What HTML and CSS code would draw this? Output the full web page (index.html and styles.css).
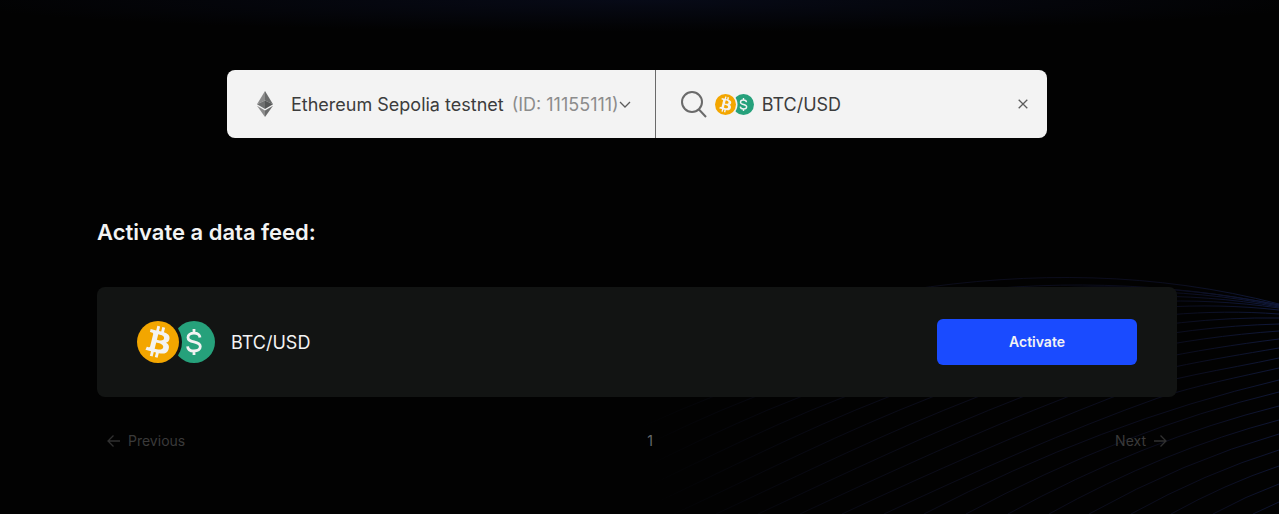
FILE: index.html
```html
<!DOCTYPE html>
<html lang="en">
<head>
<meta charset="utf-8">
<meta name="viewport" content="width=device-width, initial-scale=1">
<title>Data feeds</title>
<link rel="stylesheet" href="styles.css">
</head>
<body>
<svg class="waves" viewBox="560 260 719 254" aria-hidden="true">
  <defs>
    <linearGradient id="fade" gradientUnits="userSpaceOnUse" x1="640" y1="430" x2="1279" y2="300">
      <stop offset="0" stop-color="#10132c" stop-opacity="0"/>
      <stop offset="0.45" stop-color="#0c0d1c" stop-opacity="0.9"/>
      <stop offset="0.85" stop-color="#0b0d1f"/>
      <stop offset="1" stop-color="#10193c"/>
    </linearGradient>
  </defs>
  <g fill="none" stroke="url(#fade)">
    <path d="M535 397C783 300 1031 240 1279 304"/>
    <path d="M580 397C813 296 1046 258 1279 305"/>
    <path d="M625 397C843 302 1061 260 1279 305"/>
    <path d="M670 397C873 312 1076 266 1279 306"/>
    <path d="M464 514C554 472 622 432 712 397C901 320 1090 274 1279 307"/>
    <path d="M506 514C596 472 664 432 754 397C929 328 1104 283 1279 308"/>
    <path d="M548 514C638 472 710 432 800 397C960 336 1119 292 1279 310"/>
    <path d="M590 514C680 472 754 432 844 397C989 343 1134 303 1279 314"/>
    <path d="M632 514C722 472 798 432 888 397C1018 348 1149 316 1279 318"/>
    <path d="M674 514C764 472 842 432 932 397C1048 353 1163 327 1279 324"/>
    <path d="M716 514C806 472 887 432 977 397C1077 359 1179 338 1279 331"/>
    <path d="M758 514C848 472 932 432 1022 397C1108 365 1193 350 1279 339"/>
    <path d="M800 514C890 472 977 432 1067 397C1137 371 1209 360 1279 348"/>
    <path d="M842 514C932 472 1023 432 1113 397C1168 377 1224 370 1279 358"/>
    <path d="M884 514C974 472 1068 430 1158 398C1198 385 1239 377 1279 368"/>
    <path d="M924 514Q1101 422 1279 380"/>
    <path d="M966 514Q1122 430 1279 392"/>
    <path d="M1008 514Q1143 440 1279 406"/>
    <path d="M1049 514Q1164 450 1279 420"/>
    <path d="M1089 514Q1184 461 1279 434"/>
    <path d="M1131 514Q1205 473 1279 450"/>
    <path d="M1171 514Q1225 484 1279 466"/>
    <path d="M1213 514Q1246 496 1279 484"/>
    <path d="M1253 514L1279 502"/>
  </g>
</svg>

<svg class="defs" width="0" height="0" aria-hidden="true">
  <defs>
    <mask id="gap" maskUnits="userSpaceOnUse" x="0" y="0" width="78" height="42">
      <rect width="78" height="42" fill="#fff"/>
      <circle cx="21" cy="21" r="24" fill="#000"/>
    </mask>
    <symbol id="pair" viewBox="0 0 78 42">
      <g mask="url(#gap)"><circle cx="57" cy="21" r="21" fill="#26a17b"/></g>
      <path d="M57 8v4.500M57 29.500V34M63 16.500c-.3-2.800-2.600-4.400-6-4.400-3.600 0-6 1.700-6 4.300 0 2.900 2.700 3.800 6 4.500 3.600.8 6.300 1.700 6.300 4.700 0 2.700-2.600 4.400-6.300 4.400s-6.200-1.800-6.400-4.700" fill="none" stroke="#f3f3f3" stroke-width="2.800"/>
      <circle cx="21" cy="21" r="21" fill="#f3a600"/>
      <path transform="translate(21 21) scale(1.6) translate(-16 -16.100)" fill="#f3f3f3" d="M23.189 14.020c.314-2.096-1.283-3.223-3.465-3.975l.708-2.840-1.728-.43-.69 2.765c-.454-.114-.92-.22-1.385-.326l.695-2.783L15.596 6l-.708 2.839c-.376-.086-.746-.17-1.104-.26l.002-.009-2.384-.595-.46 1.846s1.283.294 1.256.312c.7.175.826.638.805 1.006l-.806 3.235c.048.012.11.03.18.057l-.183-.045-1.130 4.532c-.086.212-.303.531-.793.41.018.025-1.256-.313-1.256-.313l-.858 1.978 2.250.561c.418.105.828.215 1.231.318l-.715 2.872 1.727.43.708-2.840c.472.127.93.245 1.378.357l-.706 2.828 1.728.43.715-2.866c2.948.558 5.164.333 6.097-2.333.752-2.146-.037-3.385-1.588-4.192 1.130-.26 1.980-1.003 2.207-2.538zm-3.950 5.538c-.533 2.147-4.148.986-5.320.695l.95-3.805c1.172.293 4.929.872 4.370 3.110zm.535-5.569c-.487 1.953-3.495.96-4.470.717l.86-3.450c.975.243 4.118.696 3.610 2.733z"/>
    </symbol>
  </defs>
</svg>

<main class="page">
  <form class="search">
    <button type="button" class="network" aria-haspopup="listbox" aria-expanded="false">
      <svg class="eth" viewBox="0 0 16 26" aria-hidden="true">
        <path d="M8 0L0 13.200 8 9.600z" fill="#8c8c8c"/>
        <path d="M8 0l8 13.200-8-3.600z" fill="#6a6b6b"/>
        <path d="M0 13.200l8-3.600V18z" fill="#6f7070"/>
        <path d="M16 13.200L8 9.600V18z" fill="#555656"/>
        <path d="M0 14.800l8 4.700V26z" fill="#8c8c8c"/>
        <path d="M16 14.800l-8 4.700V26z" fill="#6a6b6b"/>
      </svg>
      <span class="network-name">Ethereum Sepolia testnet</span>
      <span class="network-id">(ID: 11155111)</span>
      <svg class="chevron" viewBox="0 0 12 12" aria-hidden="true"><path d="M1 4l5 5 5-5"/></svg>
    </button>
    <div class="query">
      <svg class="lens" viewBox="0 0 26 28" aria-hidden="true"><circle cx="11" cy="12" r="10"/><path d="M17.500 19l7.500 8"/></svg>
      <svg class="pair-small" aria-hidden="true"><use href="#pair"/></svg>
      <input class="field" type="text" value="BTC/USD" aria-label="Search data feeds">
      <button type="button" class="clear" aria-label="Clear search">
        <svg viewBox="0 0 10 10" aria-hidden="true"><path d="M.7.7l8.600 8.600M9.300.7L.7 9.300"/></svg>
      </button>
    </div>
  </form>

  <section class="feeds">
    <h1 class="title">Activate a data feed:</h1>
    <article class="feed">
      <svg class="pair-large" aria-hidden="true"><use href="#pair"/></svg>
      <h2 class="feed-name">BTC/USD</h2>
      <button type="button" class="activate">Activate</button>
    </article>
    <nav class="pager" aria-label="Pages">
      <button type="button" class="step" disabled>
        <svg viewBox="0 0 13 12" aria-hidden="true"><path d="M13 6H1M6.500.5L1 6l5.500 5.500"/></svg>
        Previous
      </button>
      <span class="current" aria-current="page">1</span>
      <button type="button" class="step" disabled>
        Next
        <svg viewBox="0 0 13 12" aria-hidden="true"><path d="M0 6h12M6.500.5L12 6l-5.500 5.500"/></svg>
      </button>
    </nav>
  </section>
</main>
</body>
</html>
```

FILE: styles.css
```css
* {
  box-sizing: border-box;
}

body {
  margin: 0;
  padding-right: 5px;
  min-height: 100vh;
  position: relative;
  overflow-x: hidden;
  background: radial-gradient(ellipse 54% 32px at 50% 0, #070a17, #020202) no-repeat #020202;
  color: #f3f3f3;
  font-family: Inter, "Liberation Sans", sans-serif;
}

button,
input {
  margin: 0;
  padding: 0;
  border: 0;
  background: none;
  color: inherit;
  font: inherit;
}

button:enabled {
  cursor: pointer;
}

svg {
  display: block;
  flex: none;
}

.defs {
  position: absolute;
}

.waves {
  position: absolute;
  top: 260px;
  right: 0;
  width: 719px;
  height: 254px;
}

.page {
  position: relative;
  max-width: 1080px;
  margin: 0 auto;
  padding-top: 70px;
}

.search {
  display: flex;
  max-width: 820px;
  min-height: 68px;
  margin: 0 auto;
  border-radius: 8px;
  background: #f3f3f3;
  color: #3c3c3c;
  font-size: 18px;
  line-height: 27px;
}

.network {
  display: flex;
  flex: none;
  align-items: center;
  padding: 0 24px 0 30px;
  border-right: 1px solid #6a6a6a;
}

.eth {
  width: 16px;
  height: 26px;
  margin-right: 18px;
}

.network-name {
  margin-right: 8px;
}

.network-id {
  color: #8c8c8c;
}

.chevron {
  width: 12px;
  height: 12px;
}

.chevron,
.clear svg {
  fill: none;
  stroke: #5c5c5c;
  stroke-width: 1.3;
}

.query {
  display: flex;
  flex: 1;
  align-items: center;
  min-width: 0;
  padding: 0 19px 0 25px;
}

.lens {
  width: 26px;
  height: 28px;
  margin-right: 8px;
  fill: none;
  stroke: #6a6a6a;
  stroke-width: 2;
}

.pair-small {
  width: 39px;
  height: 21px;
  margin-right: 8px;
}

.field {
  flex: 1;
  min-width: 0;
  height: 27px;
  outline: 0;
}

.clear svg {
  width: 10px;
  height: 10px;
}

.title {
  margin: 78px 0 39px;
  font-size: 22px;
  font-weight: 600;
  line-height: 32px;
}

.feed {
  display: flex;
  align-items: center;
  gap: 16px;
  padding: 32px 40px;
  border-radius: 8px;
  background: #121413;
}

.pair-large {
  width: 78px;
  height: 42px;
}

.feed-name {
  flex: 1;
  margin: 0;
  font-size: 18px;
  font-weight: 400;
  line-height: 27px;
}

.activate {
  width: 200px;
  height: 46px;
  padding-bottom: 2px;
  border-radius: 6px;
  background: #1a4bff;
  font-size: 14px;
  font-weight: 600;
}

.pager {
  display: flex;
  align-items: center;
  justify-content: space-between;
  padding: 34px 10px;
  color: #3a3a3a;
  font-size: 14px;
  line-height: 20px;
}

.step {
  display: flex;
  align-items: center;
  gap: 8px;
}

.step svg {
  width: 13px;
  height: 12px;
  fill: none;
  stroke: #303030;
  stroke-width: 1.3;
}

.current {
  color: #65696e;
}
```
